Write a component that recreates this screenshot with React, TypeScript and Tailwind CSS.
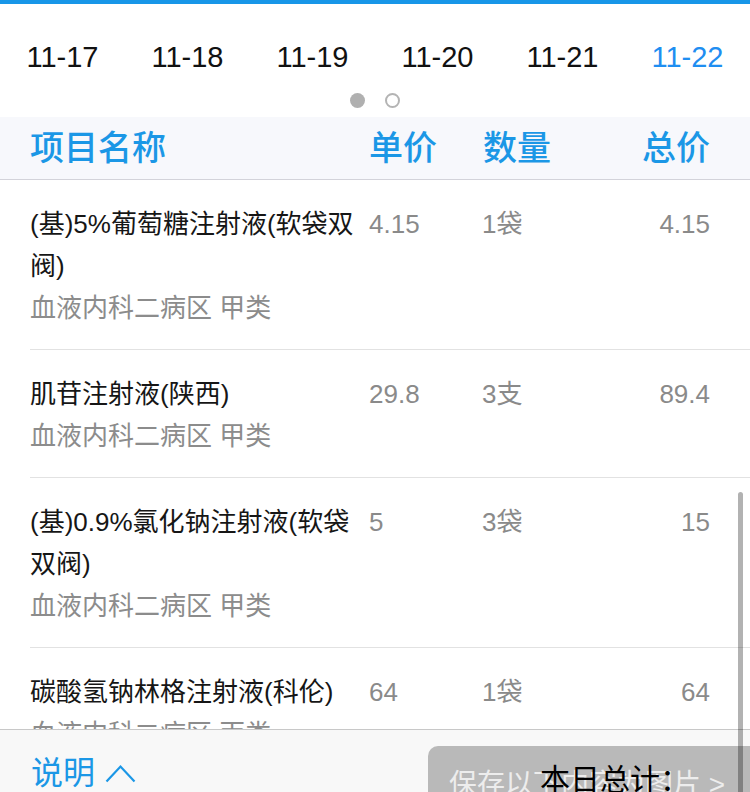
import React from "react";

type Item = { name: string; dept: string; price: string; qty: string; total: string };

const items: Item[] = [
  { name: "(基)5%葡萄糖注射液(软袋双阀)", dept: "血液内科二病区 甲类", price: "4.15", qty: "1袋", total: "4.15" },
  { name: "肌苷注射液(陕西)", dept: "血液内科二病区 甲类", price: "29.8", qty: "3支", total: "89.4" },
  { name: "(基)0.9%氯化钠注射液(软袋双阀)", dept: "血液内科二病区 甲类", price: "5", qty: "3袋", total: "15" },
  { name: "碳酸氢钠林格注射液(科伦)", dept: "血液内科二病区 丙类", price: "64", qty: "1袋", total: "64" },
  { name: "注射用头孢他啶", dept: "血液内科二病区 乙类", price: "12.5", qty: "2支", total: "25" },
];

const dates = ["11-17", "11-18", "11-19", "11-20", "11-21", "11-22"];

export default function App() {
  return (
    <div
      className="relative w-[750px] h-[792px] overflow-hidden bg-white flex flex-col"
      style={{ fontFamily: '"Liberation Sans", "Noto Sans CJK SC", sans-serif' }}
    >
      <div className="h-[4px] shrink-0 bg-[#1896e8]" />

      <div className="shrink-0 pt-[36px]">
        <div className="grid grid-cols-6 h-[34px] text-[29px] leading-[34px]">
          {dates.map((d, i) => (
            <div
              key={d}
              className={`text-center ${i === 5 ? "text-[#1f8ef1]" : "text-[#111111]"}`}
            >
              {d}
            </div>
          ))}
        </div>
        <div className="mt-[19px] mb-[9px] flex justify-center gap-[20px] h-[15px]">
          <div className="w-[15px] h-[15px] rounded-full bg-[#b0b0b0]" />
          <div className="w-[15px] h-[15px] rounded-full border-[2px] border-[#b4b4b4] bg-white" />
        </div>
      </div>

      <div className="shrink-0 h-[63px] bg-[#f7f8fc] border-b border-[#d3d3da] flex items-center pl-[30px] pr-[40px] text-[34px] leading-[34px] font-medium text-[#1b97e6]">
        <div className="w-[339px]">项目名称</div>
        <div className="w-[114px]">单价</div>
        <div className="flex-1">数量</div>
        <div className="w-[120px] text-right">总价</div>
      </div>

      <div className="shrink-0 h-[549px] overflow-hidden">
        {items.map((it) => (
          <div key={it.name} className="ml-[30px] border-b border-[#e2e2e2] pt-[23px] pb-[20px] pr-[40px] flex text-[26px] leading-[42px]">
            <div className="w-[339px] pr-[6px]">
              <div className="text-[#161616]">{it.name}</div>
              <div className="text-[#8c8c8c]">{it.dept}</div>
            </div>
            <div className="w-[113px] text-[#8a8a8a]">{it.price}</div>
            <div className="flex-1 text-[#8a8a8a]">{it.qty}</div>
            <div className="w-[120px] text-right text-[#8a8a8a]">{it.total}</div>
          </div>
        ))}
      </div>

      <div className="relative shrink-0 flex-1 border-t border-[#c8c8c8] bg-[#f8f8f8] flex items-start">
        <div className="mt-[27px] ml-[31px] flex items-center gap-[10px] text-[32px] leading-[32px] text-[#1b97e6]">
          <span>说明</span>
          <svg width="31" height="19" viewBox="0 0 31 19" fill="none">
            <polyline points="1.5,17.5 15.5,2.5 29.5,17.5" stroke="#1b97e6" strokeWidth="2.2" />
          </svg>
        </div>
        <div className="ml-auto mt-[16px] w-[322px] h-[90px] rounded-tl-[10px] bg-[#b9b9b9] pl-[21px] pt-[25px] text-[28px] leading-[28px] text-[#ededed] whitespace-nowrap">
          保存以下内容为图片 &gt;
        </div>
        <div className="absolute left-[540px] top-[35px] text-[30px] leading-[30px] text-black whitespace-nowrap">
          本日总计：
        </div>
      </div>

      <div className="absolute right-[7px] top-[492px] w-[5px] h-[320px] rounded-full bg-black/30" />
    </div>
  );
}
